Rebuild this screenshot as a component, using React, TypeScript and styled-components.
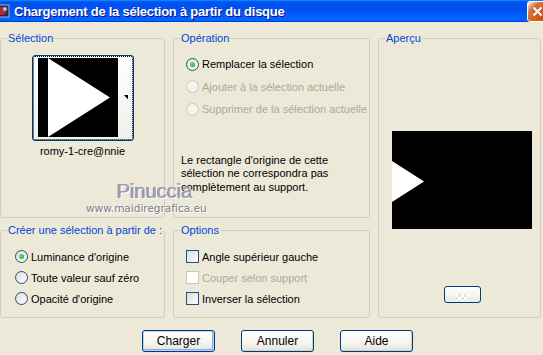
import styled, { createGlobalStyle } from 'styled-components'

const GlobalStyle = createGlobalStyle`
  html, body {
    margin: 0;
    padding: 0;
    background: #ECE9D8;
  }
`

const Dialog = styled.div`
  position: relative;
  width: 543px;
  height: 355px;
  overflow: hidden;
  display: flex;
  flex-direction: column;
  background: #ECE9D8;
  font-family: 'Liberation Sans', Arial, sans-serif;
  font-size: 11px;
  color: #000;
`

const TitleBar = styled.div`
  height: 22px;
  flex-shrink: 0;
  display: flex;
  align-items: center;
  overflow: hidden;
  background: linear-gradient(
    to bottom,
    #0997ff 0%,
    #0053ee 8%,
    #0050ee 40%,
    #0066ff 88%,
    #0066ff 93%,
    #005bff 95%,
    #003dd7 96%,
    #003dd7 100%
  );
`

const TitleIcon = styled.svg`
  width: 16px;
  height: 16px;
  margin-left: -6px;
  flex-shrink: 0;
`

const TitleText = styled.div`
  margin-left: 4px;
  color: #fff;
  font-weight: 700;
  font-size: 13px;
  letter-spacing: -0.25px;
  text-shadow: 1px 1px #0f1089;
  white-space: nowrap;
`

const CloseButton = styled.div`
  margin-left: auto;
  margin-right: -5px;
  width: 21px;
  height: 21px;
  box-sizing: border-box;
  border: 1px solid #fff;
  border-radius: 3px;
  display: flex;
  align-items: center;
  justify-content: center;
  background: radial-gradient(
    circle at 90% 90%,
    #cc4600 0%,
    #dc6527 55%,
    #cd7546 70%,
    #ffccb2 90%,
    #fff 100%
  );
`

const Body = styled.div`
  display: grid;
  grid-template-columns: 165px 197px 163px;
  grid-template-rows: 186px 94px;
  column-gap: 8px;
  row-gap: 6px;
  padding-top: 10px;
`

const Group = styled.fieldset<{ $tall?: boolean }>`
  margin: 0;
  padding: 0;
  min-width: 0;
  border: 1px solid #d0d0bf;
  border-radius: 3px;
  display: flex;
  flex-direction: column;
  ${({ $tall }) => $tall && 'grid-column: 3; grid-row: 1 / span 2;'}
`

const Legend = styled.legend`
  margin: 0 0 0 6px;
  padding: 0 1px;
  color: #0046d5;
  line-height: 13px;
`

const GroupContent = styled.div<{ $pl: number; $pt: number }>`
  display: flex;
  flex-direction: column;
  padding-left: ${({ $pl }) => $pl}px;
  padding-top: ${({ $pt }) => $pt}px;
`

const ThumbColumn = styled.div`
  display: flex;
  flex-direction: column;
  align-items: center;
  padding-top: 10px;
`

const ThumbButton = styled.div`
  width: 102px;
  height: 86px;
  box-sizing: border-box;
  padding: 2px 0 0 5px;
  border: 1px solid #003c74;
  border-radius: 3px;
  background: linear-gradient(to bottom, #fff, #f0f0ea);
  outline: 1px dotted #000;
  outline-offset: -2px;
`

const Caption = styled.div`
  margin-top: 4px;
  line-height: 13px;
`

const Row = styled.div<{ $h: number; $disabled?: boolean }>`
  height: ${({ $h }) => $h}px;
  display: flex;
  align-items: center;
  gap: 3px;
  color: ${({ $disabled }) => ($disabled ? '#aca899' : '#000')};
`

const Radio = styled.span<{ $checked?: boolean; $disabled?: boolean }>`
  position: relative;
  width: 13px;
  height: 13px;
  box-sizing: border-box;
  flex-shrink: 0;
  border-radius: 50%;
  border: 1px solid ${({ $disabled }) => ($disabled ? '#cac8bb' : '#1c5180')};
  background: ${({ $disabled }) =>
    $disabled ? '#f4f3ee' : 'linear-gradient(135deg, #dcdcd7, #fff)'};

  &::after {
    content: '';
    display: ${({ $checked }) => ($checked ? 'block' : 'none')};
    position: absolute;
    left: 3px;
    top: 3px;
    width: 5px;
    height: 5px;
    border-radius: 50%;
    background: radial-gradient(circle at 35% 35%, #6ee06e, #21a121);
  }
`

const Check = styled.span<{ $disabled?: boolean }>`
  width: 13px;
  height: 13px;
  box-sizing: border-box;
  flex-shrink: 0;
  border: 1px solid ${({ $disabled }) => ($disabled ? '#cac8bb' : '#1c5180')};
  background: ${({ $disabled }) =>
    $disabled ? '#fff' : 'linear-gradient(135deg, #dcdcd7, #fff)'};
`

const Note = styled.p`
  margin: 33px 0 0 -5px;
  line-height: 13.5px;
`

const PreviewBox = styled.div`
  display: flex;
  flex-direction: column;
  align-items: center;
  width: 140px;
  padding: 86px 0 0 13px;
`

const Preview = styled.div`
  width: 140px;
  height: 98px;
  background: #000;
`

const SmallButton = styled.div`
  margin-top: 57px;
  width: 37px;
  height: 17px;
  box-sizing: border-box;
  border: 1px solid #003c74;
  border-radius: 3px;
  display: flex;
  align-items: flex-end;
  justify-content: center;
  background: linear-gradient(to bottom, #fff, #ecebe6);
`

const Checker = styled.span`
  width: 14px;
  height: 7px;
  margin-bottom: 1px;
  background-color: #fff;
  background-image: linear-gradient(45deg, #e4e4e4 25%, transparent 25%, transparent 75%, #e4e4e4 75%),
    linear-gradient(45deg, #e4e4e4 25%, transparent 25%, transparent 75%, #e4e4e4 75%);
  background-size: 6px 6px;
  background-position: 0 0, 3px 3px;
`

const ButtonBar = styled.div`
  display: flex;
  gap: 26px;
  margin: 12px 0 0 142px;
`

const PushButton = styled.div<{ $default?: boolean }>`
  width: 73px;
  height: 22px;
  box-sizing: border-box;
  border: 1px solid #003c74;
  border-radius: 3px;
  display: flex;
  align-items: center;
  justify-content: center;
  font-size: 12px;
  background: linear-gradient(to bottom, #fff 0%, #f5f4ef 60%, #e3e2da 100%);
  box-shadow: ${({ $default }) =>
    $default ? 'inset 0 0 0 1px #bcd4f6, inset -1px -1px 0 1px #89ade4' : 'inset -1px -1px 0 #d6d0c5'};
`

const Watermark = styled.div`
  position: absolute;
  left: 86px;
  top: 181px;
  pointer-events: none;
`

const WatermarkName = styled.div`
  padding-left: 31px;
  font-family: 'Liberation Sans', Arial, sans-serif;
  font-size: 20px;
  line-height: 21px;
  color: #a0a0b4;
  text-shadow: 1px 1px 0 #fff, -1px 0 0 #8e8e9c;
`

const WatermarkUrl = styled.div`
  font-family: 'DejaVu Sans', sans-serif;
  font-size: 10.5px;
  line-height: 12px;
  color: #7d7d8c;
  text-shadow: 1px 1px 0 #fff;
`

export default function App() {
  return (
    <>
      <GlobalStyle />
      <Dialog>
        <TitleBar>
          <TitleIcon viewBox="0 0 16 16">
            <rect x="1" y="2" width="14" height="12" fill="#2a2a3a" stroke="#9fb6d8" />
            <circle cx="8" cy="8" r="4" fill="#c0203a" />
            <circle cx="11" cy="6" r="2" fill="#7fd0ff" />
          </TitleIcon>
          <TitleText>Chargement de la sélection à partir du disque</TitleText>
          <CloseButton>
            <svg width="11" height="11" viewBox="0 0 11 11">
              <path d="M1.5 1.5 L9.5 9.5 M9.5 1.5 L1.5 9.5" stroke="#fff" strokeWidth="2" />
            </svg>
          </CloseButton>
        </TitleBar>

        <Body>
          <Group>
            <Legend>Sélection</Legend>
            <ThumbColumn>
              <ThumbButton>
                <svg width="90" height="79" viewBox="0 0 90 79">
                  <rect x="0" y="0" width="80" height="79" fill="#000" />
                  <polygon points="10,0 10,79 72,39.5" fill="#fff" />
                  <polygon points="86,37 93,37 89.5,41" fill="#000" />
                </svg>
              </ThumbButton>
              <Caption>romy-1-cre@nnie</Caption>
            </ThumbColumn>
          </Group>

          <Group>
            <Legend>Opération</Legend>
            <GroupContent $pl={12} $pt={8}>
              <Row $h={22.5}>
                <Radio $checked />
                Remplacer la sélection
              </Row>
              <Row $h={22.5} $disabled>
                <Radio $disabled />
                Ajouter à la sélection actuelle
              </Row>
              <Row $h={22.5} $disabled>
                <Radio $disabled />
                Supprimer de la sélection actuelle
              </Row>
              <Note>
                Le rectangle d'origine de cette
                <br />
                sélection ne correspondra pas
                <br />
                complètement au support.
              </Note>
            </GroupContent>
          </Group>

          <Group $tall>
            <Legend>Aperçu</Legend>
            <PreviewBox>
              <Preview>
                <svg width="140" height="98" viewBox="0 0 140 98">
                  <polygon points="0,30 0,71 32,50.5" fill="#fff" />
                </svg>
              </Preview>
              <SmallButton>
                <Checker />
              </SmallButton>
            </PreviewBox>
          </Group>

          <Group>
            <Legend>Créer une sélection à partir de :</Legend>
            <GroupContent $pl={14} $pt={9}>
              <Row $h={21}>
                <Radio $checked />
                Luminance d'origine
              </Row>
              <Row $h={21}>
                <Radio />
                Toute valeur sauf zéro
              </Row>
              <Row $h={21}>
                <Radio />
                Opacité d'origine
              </Row>
            </GroupContent>
          </Group>

          <Group>
            <Legend>Options</Legend>
            <GroupContent $pl={12} $pt={9}>
              <Row $h={21}>
                <Check />
                Angle supérieur gauche
              </Row>
              <Row $h={21} $disabled>
                <Check $disabled />
                Couper selon support
              </Row>
              <Row $h={21}>
                <Check />
                Inverser la sélection
              </Row>
            </GroupContent>
          </Group>
        </Body>

        <ButtonBar>
          <PushButton $default>Charger</PushButton>
          <PushButton>Annuler</PushButton>
          <PushButton>Aide</PushButton>
        </ButtonBar>

        <Watermark>
          <WatermarkName>Pinuccia</WatermarkName>
          <WatermarkUrl>www.maidiregrafica.eu</WatermarkUrl>
        </Watermark>
      </Dialog>
    </>
  )
}
